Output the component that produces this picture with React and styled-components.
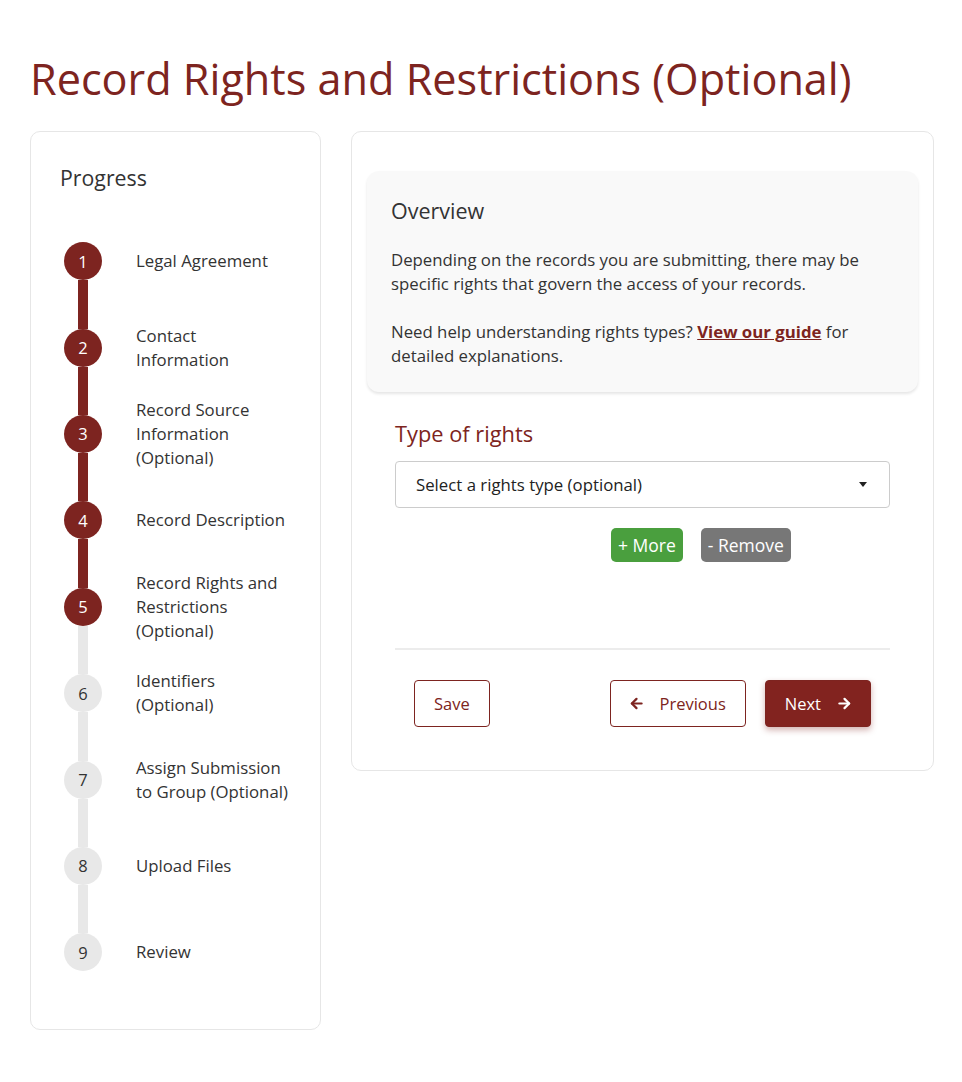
import styled, { createGlobalStyle } from "styled-components";

const maroon = "#7d2420";

const GlobalStyle = createGlobalStyle`
  body {
    margin: 0;
    background: #fff;
    font-family: "Open Sans", "Noto Sans", sans-serif;
    color: #333;
  }
  * { box-sizing: border-box; }
`;

const Page = styled.div`
  padding: 52px 28px 40px 30px;
`;

const Title = styled.h1`
  margin: 0 0 26px;
  font-size: 43.2px;
  line-height: 53px;
  font-weight: 400;
  color: ${maroon};
`;

const Columns = styled.div`
  display: flex;
  align-items: flex-start;
  gap: 30px;
`;

const Sidebar = styled.aside`
  width: 291px;
  flex-shrink: 0;
  border: 1px solid #e6e6e6;
  border-radius: 10px;
  padding: 33px 18px 33px 29px;
`;

const SideHeading = styled.h2`
  margin: 0 0 28px;
  font-size: 21.3px;
  line-height: 25px;
  font-weight: 400;
  color: #333;
`;

const StepRow = styled.div`
  display: flex;
  align-items: stretch;
  height: 86.4px;
  gap: 30px;
`;

const Marker = styled.div`
  width: 46px;
  flex-shrink: 0;
  display: flex;
  flex-direction: column;
  align-items: center;
`;

const Segment = styled.div`
  flex: 1;
  width: 10px;
  background: ${(p) => (p.$hidden ? "transparent" : p.$done ? maroon : "#e8e8e8")};
`;

const Circle = styled.div`
  width: 38px;
  height: 38px;
  border-radius: 50%;
  display: flex;
  align-items: center;
  justify-content: center;
  font-size: 16.5px;
  background: ${(p) => (p.$done ? maroon : "#e8e8e8")};
  color: ${(p) => (p.$done ? "#fff" : "#333")};
`;

const StepLabel = styled.div`
  align-self: center;
  font-size: 16.8px;
  line-height: 24px;
  color: #333;
  white-space: nowrap;
`;

const Main = styled.section`
  flex: 1;
  border: 1px solid #e6e6e6;
  border-radius: 10px;
  padding: 39px 15px 43px;
`;

const Overview = styled.div`
  background: #f9f9f9;
  border-radius: 12px;
  box-shadow: 0 2px 3px rgba(0, 0, 0, 0.1);
  padding: 28px 24px 24px;
`;

const OverviewTitle = styled.h3`
  margin: 0 0 25px;
  font-size: 21.5px;
  line-height: 24px;
  font-weight: 400;
  color: #333;
`;

const Para = styled.p`
  margin: 0;
  font-size: 16.8px;
  line-height: 24px;
  color: #333;
  & + & { margin-top: 24px; }
`;

const GuideLink = styled.a`
  color: ${maroon};
  font-weight: 700;
  text-decoration: underline;
`;

const Form = styled.div`
  padding: 0 28px;
`;

const FieldLabel = styled.h4`
  margin: 29px 0 15px;
  font-size: 21.8px;
  line-height: 25px;
  font-weight: 400;
  color: ${maroon};
`;

const Select = styled.div`
  height: 47px;
  border: 1px solid #ccc;
  border-radius: 4px;
  display: flex;
  align-items: center;
  justify-content: space-between;
  padding: 0 22px 0 20px;
  font-size: 16.8px;
  color: #222;
`;

const Caret = styled.span`
  width: 0;
  height: 0;
  border-left: 4px solid transparent;
  border-right: 4px solid transparent;
  border-top: 5px solid #222;
`;

const RowActions = styled.div`
  display: flex;
  gap: 18px;
  margin: 20px 0 0 216px;
`;

const SmallButton = styled.button`
  height: 34px;
  border: none;
  border-radius: 5px;
  padding: 0 7px;
  font-family: inherit;
  font-size: 17.5px;
  color: #fff;
  background: ${(p) => (p.$variant === "add" ? "#4a9f3e" : "#777")};
`;

const Divider = styled.hr`
  margin: 86px 0 30px;
  border: none;
  border-top: 2px solid #ececec;
`;

const Footer = styled.div`
  display: flex;
  align-items: center;
  gap: 19px;
  padding: 0 19px;
`;

const Spacer = styled.div`
  flex: 1;
`;

const NavButton = styled.button`
  height: 47px;
  display: flex;
  align-items: center;
  gap: 17px;
  padding: 0 19px;
  border-radius: 4px;
  font-family: inherit;
  font-size: 16.5px;
  border: 1px solid ${maroon};
  background: ${(p) => (p.$primary ? "#82231f" : "#fff")};
  color: ${(p) => (p.$primary ? "#fff" : maroon)};
  box-shadow: ${(p) => (p.$primary ? "0 3px 6px rgba(130, 35, 31, 0.35)" : "none")};
`;

const Arrow = ({ dir }) => (
  <svg width="13" height="13" viewBox="0 0 14 14" fill="none" stroke="currentColor" strokeWidth="2.4" strokeLinecap="round" strokeLinejoin="round">
    {dir === "left" ? (
      <>
        <path d="M12.5 7H2" />
        <path d="M7 2L2 7l5 5" />
      </>
    ) : (
      <>
        <path d="M1.5 7H12" />
        <path d="M7 2l5 5-5 5" />
      </>
    )}
  </svg>
);

const steps = [
  ["Legal Agreement"],
  ["Contact", "Information"],
  ["Record Source", "Information", "(Optional)"],
  ["Record Description"],
  ["Record Rights and", "Restrictions", "(Optional)"],
  ["Identifiers", "(Optional)"],
  ["Assign Submission", "to Group (Optional)"],
  ["Upload Files"],
  ["Review"],
];

const current = 5;

export default function App() {
  return (
    <>
      <GlobalStyle />
      <Page>
        <Title>Record Rights and Restrictions (Optional)</Title>
        <Columns>
          <Sidebar>
            <SideHeading>Progress</SideHeading>
            {steps.map((lines, i) => {
              const n = i + 1;
              return (
                <StepRow key={n}>
                  <Marker>
                    <Segment $hidden={n === 1} $done={n <= current} />
                    <Circle $done={n <= current}>{n}</Circle>
                    <Segment $hidden={n === steps.length} $done={n < current} />
                  </Marker>
                  <StepLabel>
                    {lines.map((l, j) => (
                      <div key={j}>{l}</div>
                    ))}
                  </StepLabel>
                </StepRow>
              );
            })}
          </Sidebar>
          <Main>
            <Overview>
              <OverviewTitle>Overview</OverviewTitle>
              <Para>
                Depending on the records you are submitting, there may be
                specific rights that govern the access of your records.
              </Para>
              <Para>
                Need help understanding rights types?{" "}
                <GuideLink href="#">View our guide</GuideLink> for
                <br />
                detailed explanations.
              </Para>
            </Overview>
            <Form>
              <FieldLabel>Type of rights</FieldLabel>
              <Select>
                <span>Select a rights type (optional)</span>
                <Caret />
              </Select>
              <RowActions>
                <SmallButton $variant="add">+ More</SmallButton>
                <SmallButton $variant="remove">- Remove</SmallButton>
              </RowActions>
              <Divider />
              <Footer>
                <NavButton>Save</NavButton>
                <Spacer />
                <NavButton>
                  <Arrow dir="left" />
                  Previous
                </NavButton>
                <NavButton $primary>
                  Next
                  <Arrow dir="right" />
                </NavButton>
              </Footer>
            </Form>
          </Main>
        </Columns>
      </Page>
    </>
  );
}
